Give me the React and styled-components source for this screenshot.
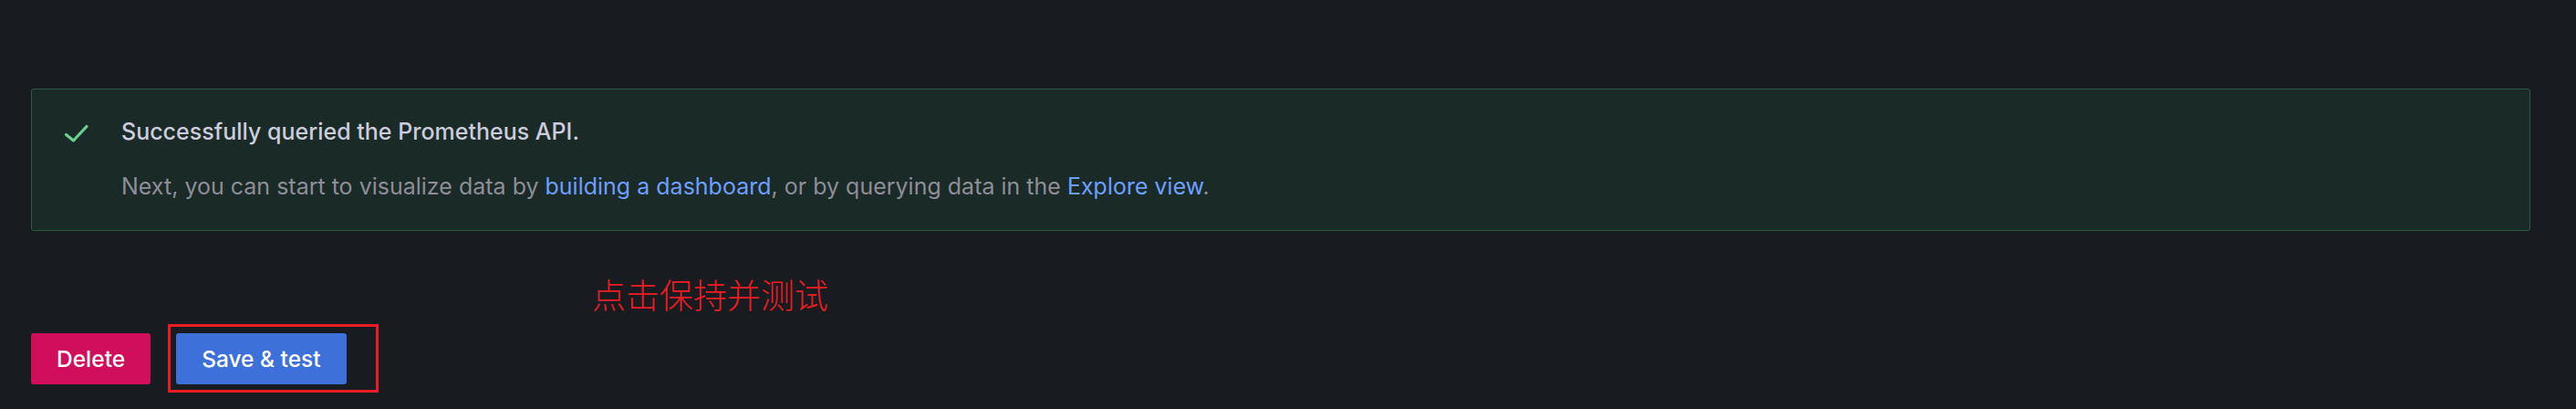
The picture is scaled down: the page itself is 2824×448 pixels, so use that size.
import styled, { createGlobalStyle } from 'styled-components';

const GlobalStyle = createGlobalStyle`
  html, body {
    margin: 0;
    padding: 0;
    background: #181b1f;
  }
  body {
    font-family: Inter, "Noto Sans", sans-serif;
    -webkit-font-smoothing: antialiased;
  }
`;

const Page = styled.div`
  position: relative;
  box-sizing: border-box;
  min-height: 448px;
  padding: 97px 50px 0 34px;
  background: #181b1f;
`;

// caixa de sucesso
const Alert = styled.div`
  display: flex;
  align-items: flex-start;
  padding: 28px;
  background: #1a2a27;
  border: 1px solid #2b5a43;
  border-radius: 3px;
`;

const IconWrap = styled.div`
  flex: 0 0 70px;
  padding-top: 8px;

  svg {
    display: block;
    margin-left: 7px;
  }
`;

const AlertBody = styled.div`
  display: flex;
  flex-direction: column;
  font-size: 25px;
  line-height: 37.5px;
`;

const AlertTitle = styled.div`
  color: #ccccdc;
  font-weight: 500;
`;

const AlertText = styled.div`
  margin-top: 22.5px;
  color: #8e8e98;
  font-weight: 400;
`;

const Link = styled.a`
  color: #6e9fff;
  text-decoration: none;
`;

const Actions = styled.div`
  display: flex;
  gap: 28px;
  margin-top: 112px;
`;

const Button = styled.button`
  height: 56px;
  padding: 0 28px;
  border: none;
  border-radius: 3px;
  font-family: Inter, "Noto Sans", sans-serif;
  font-size: 24.5px;
  font-weight: 500;
  color: #ffffff;
  background: ${(p) => (p.variant === 'destructive' ? '#d10e5c' : '#3d71d9')};
  cursor: pointer;
`;

const Highlighted = styled.div`
  position: relative;
  display: flex;
`;

const RedFrame = styled.div`
  position: absolute;
  left: -9px;
  top: -10px;
  width: 231px;
  height: 75px;
  box-sizing: border-box;
  border: 3px solid #ec1c24;
  pointer-events: none;
`;

const Note = styled.div`
  position: absolute;
  left: 649px;
  top: 302px;
  font-family: "Noto Sans CJK SC", sans-serif;
  font-size: 37px;
  line-height: 40px;
  font-weight: 300;
  color: #ec1c24;
  white-space: nowrap;
`;

const CheckIcon = () => (
  <svg width="28" height="24" viewBox="0 0 28 24" fill="none">
    <polyline
      points="2.5,13.5 10.5,20 25,4.5"
      stroke="#6ccf8e"
      strokeWidth="3.2"
      strokeLinecap="round"
      strokeLinejoin="round"
    />
  </svg>
);

export default function App() {
  return (
    <>
      <GlobalStyle />
      <Page>
        <Alert>
          <IconWrap>
            <CheckIcon />
          </IconWrap>
          <AlertBody>
            <AlertTitle>Successfully queried the Prometheus API.</AlertTitle>
            <AlertText>
              Next, you can start to visualize data by{' '}
              <Link href="#">building a dashboard</Link>, or by querying data in the{' '}
              <Link href="#">Explore view</Link>.
            </AlertText>
          </AlertBody>
        </Alert>

        <Actions>
          <Button variant="destructive">Delete</Button>
          <Highlighted>
            <Button>Save &amp; test</Button>
            <RedFrame />
          </Highlighted>
        </Actions>

        <Note>点击保持并测试</Note>
      </Page>
    </>
  );
}
